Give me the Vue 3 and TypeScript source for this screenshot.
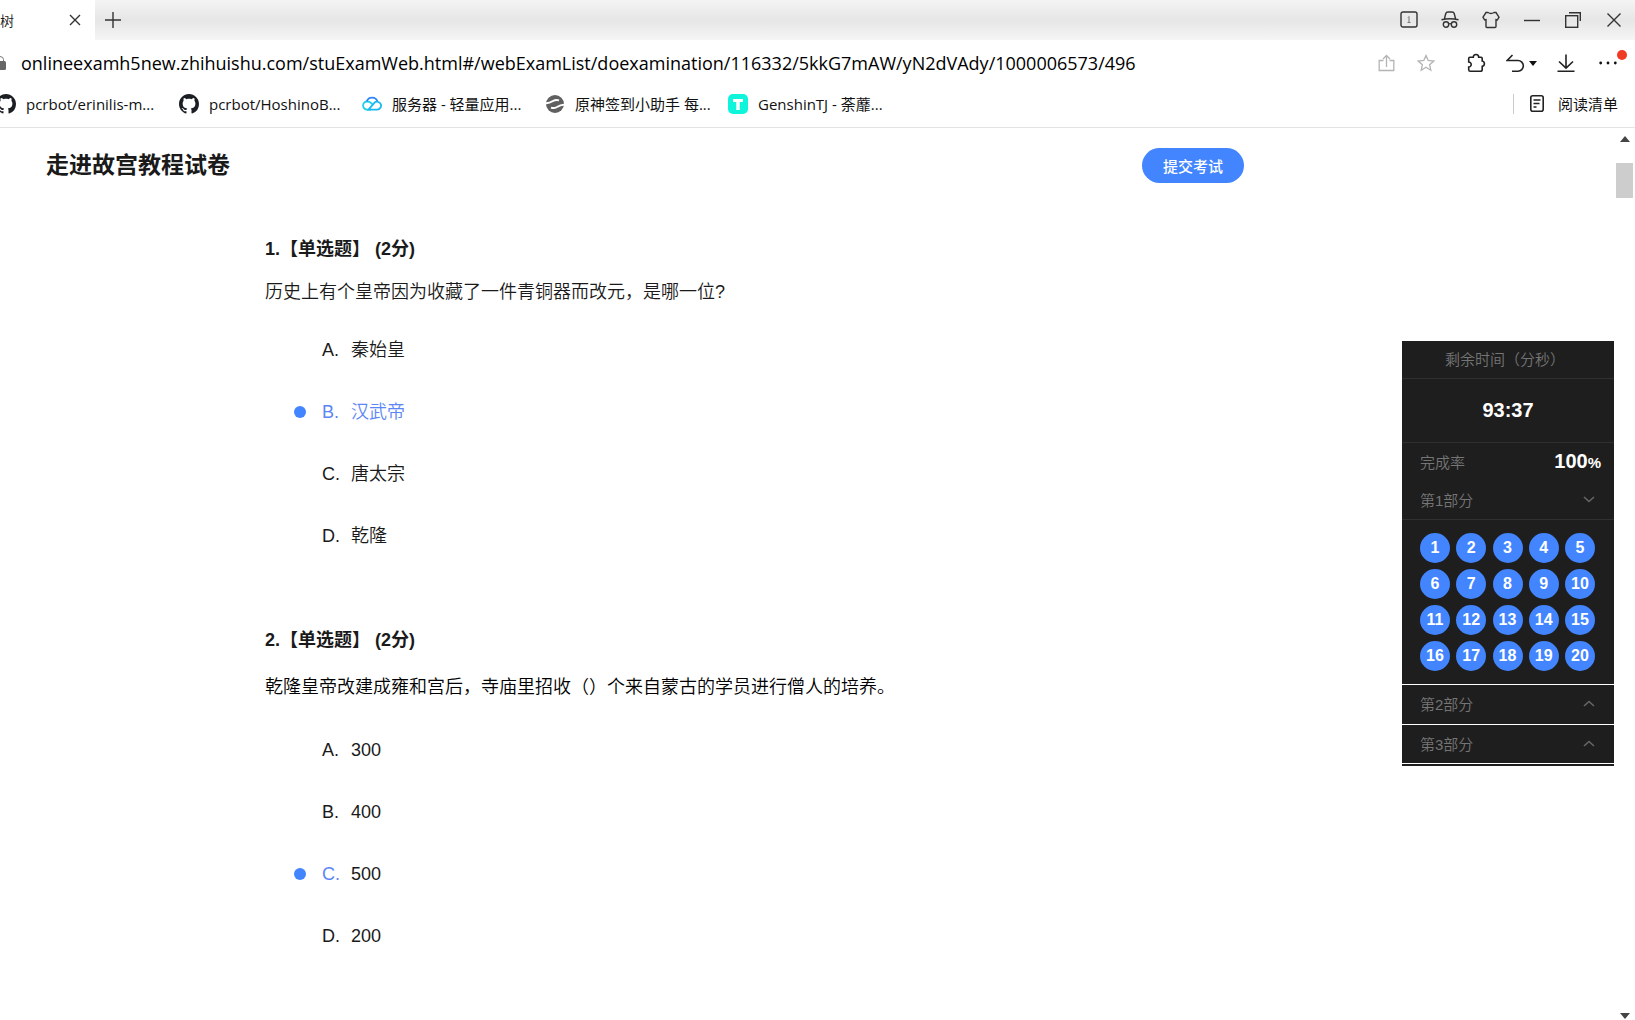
<script setup lang="ts">
import { ref } from 'vue'

interface Question {
  id: number
  text: string
  options: string[]
  tinted: boolean
}

const address = ref(
  'onlineexamh5new.zhihuishu.com/stuExamWeb.html#/webExamList/doexamination/116332/5kkG7mAW/yN2dVAdy/1000006573/496',
)

const bookmarks = [
  { icon: 'github', label: 'pcrbot/erinilis-m...' },
  { icon: 'github', label: 'pcrbot/HoshinoB...' },
  { icon: 'cloud', label: '服务器 - 轻量应用...' },
  { icon: 'swirl', label: '原神签到小助手 每...' },
  { icon: 'tee', label: 'GenshinTJ - 荼蘼...' },
]

const questions: Question[] = [
  {
    id: 1,
    text: '历史上有个皇帝因为收藏了一件青铜器而改元，是哪一位?',
    options: ['秦始皇', '汉武帝', '唐太宗', '乾隆'],
    tinted: true,
  },
  {
    id: 2,
    text: '乾隆皇帝改建成雍和宫后，寺庙里招收（）个来自蒙古的学员进行僧人的培养。',
    options: ['300', '400', '500', '200'],
    tinted: false,
  },
]

const answers = ref<Record<number, number>>({ 1: 1, 2: 2 })
const letters = ['A', 'B', 'C', 'D']
</script>

<template>
  <div class="browser">
    <div class="titlebar">
      <div class="tab">
        <span class="tab-title">树</span>
        <button class="plain tab-close" aria-label="关闭标签页">
          <svg width="12" height="12" viewBox="0 0 12 12"><path d="M1 1l10 10M11 1L1 11" /></svg>
        </button>
      </div>
      <button class="plain new-tab" aria-label="新建标签页">
        <svg width="16" height="16" viewBox="0 0 16 16"><path d="M8 0v16M0 8h16" /></svg>
      </button>
      <div class="window-tools">
        <button class="plain" aria-label="标签数量">
          <svg width="18" height="18" viewBox="0 0 18 18">
            <rect x="1" y="1" width="16" height="15" rx="2" />
            <path class="faint" d="M8 6.500l1-1v6M7.500 11.500h3" />
          </svg>
        </button>
        <button class="plain" aria-label="无痕模式">
          <svg width="18" height="18" viewBox="0 0 18 18">
            <path d="M3.500 7.500L4.800 2.500Q5.200 1 7 1h4q1.800 0 2.200 1.500l1.300 5M0.500 8.800q8.500-2 17 0M7.600 13q1.400-.8 2.800 0" />
            <circle cx="5" cy="13.500" r="2.700" />
            <circle cx="13" cy="13.500" r="2.700" />
          </svg>
        </button>
        <button class="plain" aria-label="皮肤">
          <svg width="18" height="18" viewBox="0 0 18 18">
            <path d="M6 1.500q3 2 6 0h2L17 6.200 15.300 9l-1.300-.4V15.500q0 1-1 1H5q-1 0-1-1V8.600L2.700 9 1 6.200 4 1.500z" />
          </svg>
        </button>
        <button class="plain" aria-label="最小化">
          <svg width="16" height="16" viewBox="0 0 16 16"><path d="M0 8.500h16" /></svg>
        </button>
        <button class="plain" aria-label="还原">
          <svg width="16" height="16" viewBox="0 0 16 16">
            <rect x="0.700" y="3.700" width="12" height="11.600" />
            <path d="M4 .7h11.300V9" />
          </svg>
        </button>
        <button class="plain" aria-label="关闭窗口">
          <svg width="14" height="14" viewBox="0 0 14 14"><path d="M.5.500l13 13M13.500.500l-13 13" /></svg>
        </button>
      </div>
    </div>

    <div class="address-bar">
      <svg width="6" height="16" viewBox="5 0 6 16">
        <path d="M5 1.500q3.500.2 3.500 3V6" fill="none" stroke="#777" />
        <rect x="2" y="6" width="9" height="9" rx="1.500" fill="#666" />
      </svg>
      <input v-model="address" class="address" type="text" aria-label="地址" spellcheck="false" />
      <div class="page-tools">
        <button class="plain pale" aria-label="分享">
          <svg width="17" height="18" viewBox="0 0 17 18"><path d="M5.500 6.500H1.200v10h14.600v-10h-4.300M8.500 13V1.500M5 5l3.500-3.500L12 5" /></svg>
        </button>
        <button class="plain pale" aria-label="收藏">
          <svg width="18" height="18" viewBox="0 0 18 18"><path d="M9 1.500l2.200 5 5.600.6-4.200 3.600 1.200 5.500L9 13.300l-4.800 2.900 1.200-5.500L1.200 7.100l5.600-.6z" /></svg>
        </button>
      </div>
      <div class="browser-tools">
        <button class="plain" aria-label="扩展">
          <svg width="20" height="20" viewBox="0 0 20 20">
            <path class="bold" d="M7.300 4.200a2.700 2.700 0 0 1 5.400 0H15q1.200 0 1.200 1.200V8a2.700 2.700 0 0 1 0 5.300V16.500q0 1.800-1.800 1.800H4.300q-1.600 0-1.600-1.700V14a2.300 2.300 0 1 0 0-5V5.400q0-1.200 1.200-1.200z" />
          </svg>
        </button>
        <button class="plain undo" aria-label="撤销">
          <svg width="19" height="18" viewBox="0 0 19 18"><path class="bold" d="M6.500 1L1.200 6.500H12a5.300 5.300 0 0 1 0 10.700H6" /></svg>
          <svg width="8" height="5" viewBox="0 0 8 5"><path class="solid" d="M0 0h8L4 5z" /></svg>
        </button>
        <button class="plain" aria-label="下载">
          <svg width="18" height="18" viewBox="0 0 18 18"><path class="bold" d="M9 .5V14M2 7.500L9 14.200 16 7.500M.5 17.300h17" /></svg>
        </button>
        <button class="plain more" aria-label="更多">
          <svg width="18" height="4" viewBox="0 0 18 4">
            <circle class="solid" cx="1.700" cy="2" r="1.400" />
            <circle class="solid" cx="9" cy="2" r="1.400" />
            <circle class="solid" cx="16.300" cy="2" r="1.400" />
          </svg>
          <i class="badge"></i>
        </button>
      </div>
    </div>

    <nav class="bookmarks">
      <a v-for="mark in bookmarks" :key="mark.label" class="bookmark" href="#">
        <svg v-if="mark.icon === 'github'" width="20" height="20" viewBox="0 0 16 16">
          <path fill="#1b1f23" d="M8 0C3.580 0 0 3.580 0 8c0 3.540 2.290 6.530 5.470 7.590.4.070.55-.17.55-.38 0-.19-.01-.82-.01-1.490-2.010.37-2.530-.49-2.690-.94-.09-.23-.48-.94-.82-1.130-.28-.15-.68-.52-.01-.53.63-.01 1.080.58 1.230.82.72 1.210 1.870.87 2.330.66.07-.52.28-.87.51-1.070-1.780-.2-3.640-.89-3.640-3.950 0-.87.31-1.590.82-2.150-.08-.2-.36-1.020.08-2.120 0 0 .67-.21 2.200.82.64-.18 1.320-.27 2-.27.68 0 1.360.09 2 .27 1.530-1.040 2.200-.82 2.200-.82.44 1.100.16 1.920.08 2.120.51.56.82 1.270.82 2.150 0 3.070-1.870 3.750-3.650 3.950.29.25.54.73.54 1.480 0 1.070-.01 1.930-.01 2.200 0 .21.15.46.55.38A8.010 8.010 0 0 0 16 8c0-4.420-3.580-8-8-8z" />
        </svg>
        <svg v-else-if="mark.icon === 'cloud'" width="20" height="20" viewBox="0 0 20 20" fill="none" stroke-width="1.8">
          <path stroke="#1fd0e8" d="M9 15.700H5.200a4 4 0 0 1 0-8.200q2.400 0 4 1.600l1.800 1.700" />
          <path stroke="#2d86f5" d="M4.800 7.400a5.600 5.600 0 0 1 10.600.2" />
          <path stroke="#19b8f5" d="M6.500 15.700h8.700a4 4 0 1 0-2.900-6.900z" />
        </svg>
        <svg v-else-if="mark.icon === 'swirl'" width="20" height="20" viewBox="0 0 20 20">
          <circle cx="10" cy="10" r="9" fill="#606060" />
          <path d="M0 9.500Q5 9 8 7q3-1.800 6-.6M20 10.500q-5 .5-8 2.500-3 1.800-6 .6" fill="none" stroke="#fff" stroke-width="2" />
        </svg>
        <svg v-else width="20" height="20" viewBox="0 0 20 20">
          <rect width="20" height="20" rx="5" fill="#0ff5dc" />
          <path d="M5 5h10v3h-3.300v8H8.300V8H5z" fill="#fff" />
        </svg>
        <span>{{ mark.label }}</span>
      </a>
      <button class="plain reading-list">
        <svg width="14" height="17" viewBox="0 0 14 17">
          <rect class="bold" x=".8" y=".8" width="12.400" height="15.400" rx="2" />
          <path class="bold" d="M3.500 5h7M3.500 8.500h6M3.500 12h3" />
        </svg>
        <span>阅读清单</span>
      </button>
    </nav>

    <div class="viewport">
      <main class="paper">
        <header class="paper-head">
          <h1>走进故宫教程试卷</h1>
          <button class="submit">提交考试</button>
        </header>
        <fieldset v-for="q in questions" :key="q.id" class="question">
          <legend>{{ q.id }}.【单选题】 (2分)</legend>
          <p :class="{ roomy: !q.tinted }">{{ q.text }}</p>
          <label
            v-for="(option, i) in q.options"
            :key="option"
            class="option"
            :class="{ chosen: answers[q.id] === i, tinted: q.tinted }"
          >
            <input v-model="answers[q.id]" type="radio" :name="`q${q.id}`" :value="i" />
            <span class="letter">{{ letters[i] }}.</span>
            <span class="answer">{{ option }}</span>
          </label>
        </fieldset>
      </main>

      <aside class="card">
        <div class="row caption">剩余时间（分秒）</div>
        <div class="row clock">93:37</div>
        <div class="row rate">
          <span>完成率</span>
          <strong>100<small>%</small></strong>
        </div>
        <button class="row part open">
          第1部分
          <svg width="12" height="7" viewBox="0 0 12 7"><path d="M1 1l5 4.500L11 1" /></svg>
        </button>
        <div class="numbers">
          <button v-for="n in 20" :key="n">{{ n }}</button>
        </div>
        <button v-for="part in [2, 3]" :key="part" class="row part closed">
          第{{ part }}部分
          <svg width="12" height="7" viewBox="0 0 12 7"><path d="M1 6l5-4.500L11 6" /></svg>
        </button>
      </aside>

      <div class="scrollbar">
        <button class="plain" aria-label="向上滚动">
          <svg width="10" height="6" viewBox="0 0 10 6"><path d="M0 6h10L5 0z" /></svg>
        </button>
        <div class="track"><div class="thumb"></div></div>
        <button class="plain" aria-label="向下滚动">
          <svg width="10" height="6" viewBox="0 0 10 6"><path d="M0 0h10L5 6z" /></svg>
        </button>
      </div>
    </div>
  </div>
</template>

<style>
body {
  background: #fff;
}
</style>

<style scoped>
.browser {
  display: flex;
  flex-direction: column;
  min-height: 100vh;
  overflow: hidden;
  box-sizing: border-box;
  color: #1a1a1a;
  font-family: 'Liberation Sans', 'Noto Sans CJK SC', sans-serif;
  font-weight: 350;
}
.browser * {
  box-sizing: border-box;
}
svg {
  display: block;
  flex: none;
}
button {
  font-family: inherit;
  font-weight: inherit;
  cursor: pointer;
}
.plain {
  display: flex;
  align-items: center;
  justify-content: center;
  padding: 0;
  border: 0;
  background: none;
  color: #111;
}
.plain svg {
  fill: none;
  stroke: #333;
  stroke-width: 1.4;
}
.plain .bold {
  stroke: #222;
  stroke-width: 1.6;
}
.plain .faint {
  stroke: #777;
  stroke-width: 1;
}
.plain .solid {
  fill: #111;
  stroke: none;
}
.plain.pale svg {
  stroke: #b4b4b4;
  stroke-width: 1.3;
}

.titlebar {
  display: flex;
  height: 40px;
  padding-right: 1px;
  background: linear-gradient(#f4f4f4, #e6e6e6 50%, #f5f5f5);
}
.tab {
  display: flex;
  align-items: center;
  justify-content: space-between;
  width: 95px;
  padding-right: 14px;
  background: #fff;
  font-size: 14px;
}
.tab-close {
  height: 40px;
}
.new-tab {
  width: 36px;
}
.window-tools {
  display: flex;
  margin-left: auto;
}
.window-tools button {
  width: 41px;
}

.address-bar {
  display: flex;
  align-items: center;
  height: 46px;
}
.address {
  flex: 1;
  min-width: 0;
  height: 32px;
  margin-left: 15px;
  padding: 0;
  border: 0;
  outline: 0;
  background: none;
  color: #000;
  font: 18px 'Open Sans', 'Noto Sans CJK SC', sans-serif;
}
.page-tools,
.browser-tools {
  display: flex;
}
.page-tools button {
  width: 40px;
}
.browser-tools {
  margin: 0 6px 0 9px;
}
.browser-tools button {
  width: 42px;
  height: 40px;
}
.browser-tools .undo {
  width: 48px;
  gap: 4px;
}
.more {
  position: relative;
}
.badge {
  position: absolute;
  top: 7px;
  right: 2px;
  width: 10px;
  height: 10px;
  border-radius: 50%;
  background: #f03a24;
}

.bookmarks {
  display: flex;
  align-items: center;
  height: 42px;
  padding: 0 17px 6px 0;
  margin-left: -4px;
  border-bottom: 1px solid #e4e4e4;
  font: 15px 'Open Sans', 'Noto Sans CJK SC', sans-serif;
}
.bookmark {
  display: flex;
  align-items: center;
  gap: 10px;
  width: 183px;
  color: #111;
  text-decoration: none;
  white-space: nowrap;
}
.reading-list {
  gap: 14px;
  height: 20px;
  margin-left: auto;
  padding-left: 16px;
  border-left: 1px solid #ccc;
  font-size: 15px;
}

.viewport {
  display: flex;
  flex: 1;
}
.paper {
  flex: 1;
  min-width: 0;
}
.paper-head {
  display: flex;
  align-items: center;
  justify-content: space-between;
  height: 74px;
  padding: 0 158px 0 46px;
}
h1 {
  margin: 0;
  font-size: 23px;
  line-height: 32px;
}
.submit {
  width: 102px;
  height: 35px;
  padding: 0;
  border: 0;
  border-radius: 18px;
  background: #4285ff;
  color: #fff;
  font-size: 15px;
  font-weight: 500;
}

.question {
  display: flex;
  flex-direction: column;
  min-width: 0;
  margin: 0 0 60px;
  padding: 0 0 0 265px;
  border: 0;
  font-size: 18px;
  line-height: 26px;
}
.paper-head + .question {
  margin-top: 34px;
}
.question legend {
  padding: 0;
  font-weight: bold;
}
.question p {
  margin: 17px 0 14px;
}
.question p.roomy {
  margin: 21px 0 19px;
  color: #000;
}
.option {
  display: flex;
  align-items: center;
  height: 62px;
  padding-left: 29px;
}
.option input {
  appearance: none;
  width: 12px;
  height: 12px;
  margin: 0 16px 0 0;
  border-radius: 50%;
}
.option input:checked {
  background: #4285ff;
}
.letter {
  width: 29px;
}
.chosen .letter,
.chosen.tinted .answer {
  color: #5b86f5;
}

.card {
  display: flex;
  flex-direction: column;
  align-self: flex-start;
  width: 212px;
  margin-top: 213px;
  border-bottom: 2px solid #1e1e1e;
  background: #1e1e1e;
  color: #757575;
  font-size: 15px;
}
.row {
  display: flex;
  align-items: center;
  justify-content: space-between;
  height: 39px;
  padding: 0 13px 2px 18px;
}
.row.caption {
  justify-content: center;
  height: 38px;
  padding: 0 6px 2px 0;
  border-bottom: 1px solid #303030;
}
.row.clock {
  justify-content: center;
  height: 64px;
  padding: 0;
  border-bottom: 1px solid #303030;
  color: #fff;
  font-size: 20px;
  font-weight: bold;
}
.row.rate {
  height: 38px;
}
.rate strong {
  color: #fff;
  font-size: 20px;
  font-weight: bold;
}
.rate small {
  font-size: 15px;
}
.row.part {
  padding-right: 19px;
  border: 0;
  background: none;
  color: inherit;
  font-size: 15px;
}
.row.part svg {
  fill: none;
  stroke: #666;
  stroke-width: 1.6;
}
.row.part.open {
  border-bottom: 1px solid #303030;
}
.row.part.closed {
  height: 40px;
  border-top: 1px solid #fff;
}
.row.part.closed:last-child {
  border-bottom: 1px solid #fff;
}
.numbers {
  display: grid;
  grid-template-columns: repeat(5, 30px);
  justify-content: space-between;
  row-gap: 6px;
  padding: 13px 19px 13px 18px;
}
.numbers button {
  height: 30px;
  padding: 0;
  border: 0;
  border-radius: 50%;
  background: #4285ff;
  color: #fff;
  font-size: 16px;
  font-weight: bold;
}

.scrollbar {
  display: flex;
  flex-direction: column;
  width: 21px;
}
.scrollbar button {
  height: 22px;
}
.scrollbar svg {
  fill: #444;
  stroke: none;
}
.track {
  flex: 1;
  padding: 13px 2px 0;
}
.thumb {
  height: 35px;
  background: #cdcdcd;
}
</style>
